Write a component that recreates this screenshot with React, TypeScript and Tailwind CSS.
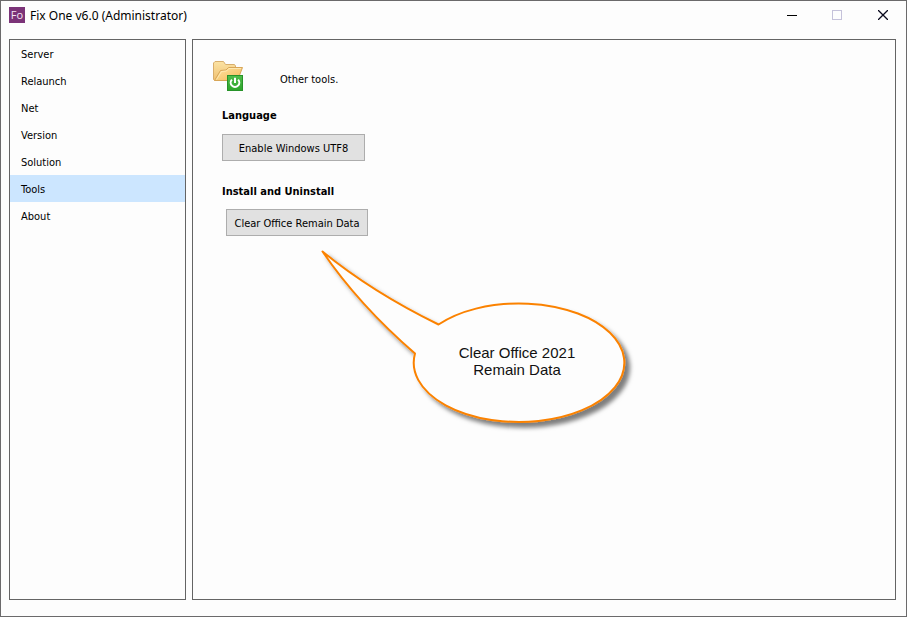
import { useState } from "react";

const PAGES = ["Server", "Relaunch", "Net", "Version", "Solution", "Tools", "About"];

function TitleBar() {
  return (
    <header className="flex h-[38px] shrink-0 items-start justify-between">
      <div className="flex h-7 items-center gap-[5px] pl-2">
        <span className="flex size-4 items-center justify-center bg-[#7b3378] font-['Open_Sans',sans-serif] text-[11px] leading-4 font-medium text-[#f3e6f3]">
          Fo
        </span>
        <h1 className="pt-0.5 font-['Noto_Sans',sans-serif] text-[12px] leading-4 text-black">
          Fix One v6.0 (Administrator)
        </h1>
      </div>
      <div className="flex">
        <button type="button" aria-label="Minimize" className="flex h-7 w-[45px] items-center justify-center">
          <svg viewBox="0 0 10 10" className="size-[10px]" shapeRendering="crispEdges">
            <path d="M0 5.5H10" stroke="#000" />
          </svg>
        </button>
        <button type="button" aria-label="Maximize" disabled className="flex h-7 w-[46px] items-center justify-center">
          <svg viewBox="0 0 10 10" className="size-[10px]" shapeRendering="crispEdges">
            <rect x=".5" y=".5" width="9" height="9" fill="none" stroke="#c5c2da" />
          </svg>
        </button>
        <button type="button" aria-label="Close" className="flex h-7 w-[46px] items-center justify-center">
          <svg viewBox="0 0 10 10" className="size-[10px]">
            <path d="M0 0L10 10M10 0L0 10" stroke="#08081c" strokeWidth="1.3" />
          </svg>
        </button>
      </div>
    </header>
  );
}

function FolderIcon() {
  return (
    <svg viewBox="0 0 32 32" className="size-8 shrink-0" aria-hidden="true">
      <defs>
        <linearGradient id="folder-back" x1="0" y1="0" x2="0" y2="1">
          <stop offset="0" stopColor="#fbe3a4" />
          <stop offset="1" stopColor="#f0c070" />
        </linearGradient>
        <linearGradient id="folder-front" x1="0" y1="0" x2="1" y2="1">
          <stop offset="0" stopColor="#fde5a4" />
          <stop offset="1" stopColor="#f2b858" />
        </linearGradient>
        <linearGradient id="power" x1="0" y1="0" x2="0" y2="1">
          <stop offset="0" stopColor="#4fbd4a" />
          <stop offset="1" stopColor="#2da52c" />
        </linearGradient>
      </defs>
      <path
        d="M.5 19.5V3L2 1.5H10.5L12.5 4.5H21.5L22.5 6V20.5H1.5Z"
        fill="url(#folder-back)"
        stroke="#d8ae6c"
      />
      <path d="M1.5 20.5L7.5 10.5L13 10L15.5 7.5H29.5L24.5 20.5Z" fill="url(#folder-front)" stroke="#d8a658" />
      <path d="M3.5 19.5L8.5 11.5L13.5 11L16 8.5H28" fill="none" stroke="#fff0c4" strokeWidth=".7" />
      <rect x="14.5" y="15.5" width="15" height="15" fill="url(#power)" stroke="#279329" />
      <path d="M18.9 19.6A4.3 4.3 0 1 0 25.1 19.6" fill="none" stroke="#fff" strokeWidth="2" />
      <path d="M22 17.7V23" stroke="#fff" strokeWidth="2" />
    </svg>
  );
}

function Callout() {
  return (
    <div className="pointer-events-none absolute top-[206px] left-[125px] h-[190px] w-[320px]">
      <svg viewBox="318 246 320 190" className="h-full w-full" aria-hidden="true">
        <defs>
          <filter id="callout-shadow" x="-5%" y="-5%" width="115%" height="115%">
            <feDropShadow dx="4.8" dy="4.8" stdDeviation="1.9" floodColor="#000" floodOpacity=".5" />
          </filter>
        </defs>
        <path
          d="M322.5 251.5Q372 292 438.5 324.5A105.3 59.3 0 1 1 415 353.5Q359 305 322.5 251.5Z"
          fill="#fdfdfd"
          stroke="#fb8200"
          strokeWidth="2"
          strokeLinejoin="round"
          filter="url(#callout-shadow)"
        />
      </svg>
      <p className="absolute top-[98px] left-[99px] w-[200px] text-center font-['Liberation_Sans',Arial,sans-serif] text-[15px] leading-[17px] text-[#111]">
        Clear Office 2021
        <br />
        Remain Data
      </p>
    </div>
  );
}

export default function App() {
  const [page, setPage] = useState("Tools");

  return (
    <div className="flex min-h-screen flex-col border border-[#6b6a6b] bg-[#fdfdfd] font-['DejaVu_Sans_Condensed','DejaVu_Sans',sans-serif] text-[11px] leading-[18px] text-black">
      <TitleBar />
      <div className="flex grow gap-1.5 pr-[10px] pb-4 pl-2">
        <nav className="flex w-[177px] shrink-0 flex-col border border-[#646464]">
          {PAGES.map((name) => (
            <button
              key={name}
              type="button"
              onClick={() => setPage(name)}
              aria-current={name === page ? "page" : undefined}
              className={`h-[27px] pt-0.5 pl-[11px] text-left ${name === page ? "bg-[#cce6ff]" : ""}`}
            >
              {name}
            </button>
          ))}
        </nav>

        <main className="relative min-w-0 grow border border-[#646464] pt-5">
          <div className="flex items-center gap-[35px] pl-5">
            <FolderIcon />
            <p className="pt-2">Other tools.</p>
          </div>

          <div className="flex flex-col items-start gap-[22px] pt-[15px] pl-[29px]">
            <section className="flex flex-col items-start gap-[9px]">
              <h2 className="font-bold">Language</h2>
              <button type="button" className="h-[27px] w-[143px] border border-[#adadad] bg-[#e1e1e1] pt-0.5">
                Enable Windows UTF8
              </button>
            </section>
            <section className="flex flex-col items-start gap-2">
              <h2 className="font-bold">Install and Uninstall</h2>
              <button type="button" className="ml-1 h-[27px] w-[142px] border border-[#adadad] bg-[#e1e1e1] pt-0.5">
                Clear Office Remain Data
              </button>
            </section>
          </div>

          <Callout />
        </main>
      </div>
    </div>
  );
}
